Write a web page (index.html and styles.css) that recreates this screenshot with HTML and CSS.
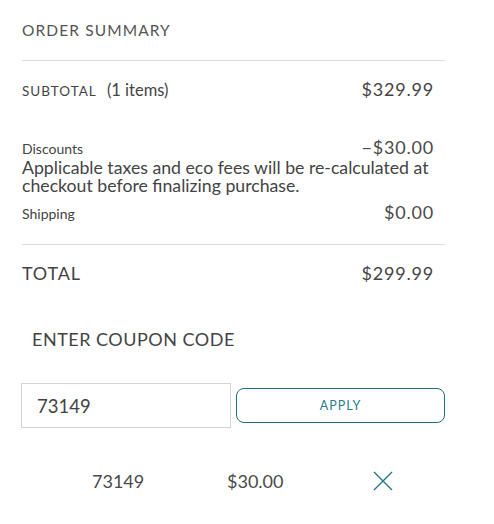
FILE: index.html
```html
<!DOCTYPE html>
<html lang="en">
<head>
    <meta charset="UTF-8">
    <meta name="viewport" content="width=device-width, initial-scale=1.0">
    <title>Order Summary</title>
<link rel="stylesheet" href="styles.css">
</head>
<body>
    <div class="summary">
        <h2 class="summary-title">ORDER SUMMARY</h2>

        <div class="row subtotal">
            <span><span class="label-caps">SUBTOTAL</span> <span class="items">(1 items)</span></span>
            <span class="amount">$329.99</span>
        </div>

        <div class="details">
            <div class="row small-row">
                <span class="small-label">Discounts</span>
                <span class="amount light">&minus;$30.00</span>
            </div>
            <p class="note">Applicable taxes and eco fees will be re-calculated at checkout before finalizing purchase.</p>
            <div class="row small-row">
                <span class="small-label">Shipping</span>
                <span class="amount light">$0.00</span>
            </div>
        </div>

        <div class="row total">
            <span>TOTAL</span>
            <span class="amount">$299.99</span>
        </div>

        <h3 class="coupon-title">ENTER COUPON CODE</h3>

        <div class="coupon-form">
            <input class="coupon-input" type="text" value="73149">
            <button class="apply-btn">APPLY</button>
        </div>

        <div class="applied">
            <span class="applied-code">73149</span>
            <span class="applied-amount">$30.00</span>
            <button class="remove-btn" title="Remove">
                <svg width="20" height="20" viewBox="0 0 20 20">
                    <path d="M1 1 L19 19 M19 1 L1 19" stroke="#1f7c85" stroke-width="1.4" fill="none"/>
                </svg>
            </button>
        </div>
    </div>
</body>
</html>
```

FILE: styles.css
```css
body {
  margin: 0;
  padding: 0;
  background: #fff;
  font-family: "Lato", "Open Sans", sans-serif;
  color: #444;
}

.summary {
  width: 423px;
  margin-left: 22px;
  padding-top: 20px;
}

.summary-title {
  margin: 0;
  font-size: 15.5px;
  line-height: 20px;
  font-weight: 400;
  letter-spacing: 1.1px;
  color: #555;
  padding-bottom: 20px;
  border-bottom: 1px solid #dcdcdc;
}

.row {
  display: flex;
  justify-content: space-between;
  align-items: baseline;
  padding-right: 11px;
}

.subtotal {
  padding-top: 18px;
  line-height: 20px;
}

.label-caps {
  font-size: 13.5px;
  letter-spacing: 1px;
  margin-right: 6px;
}

.items {
  font-size: 16.5px;
}

.amount {
  font-size: 18px;
  letter-spacing: 0.8px;
}

.amount.light {
  color: #4a4a4a;
}

.details {
  margin-top: 37px;
  padding-bottom: 21px;
  border-bottom: 1px solid #dcdcdc;
}

.small-row {
  line-height: 18px;
}

.small-label {
  font-size: 14px;
}

.note {
  margin: 1px 0 8px;
  font-size: 17.7px;
  line-height: 18px;
}

.total {
  padding-top: 18px;
  font-size: 18px;
  line-height: 20px;
  letter-spacing: 0.8px;
}

.coupon-title {
  margin: 46px 0 0 10px;
  font-size: 18px;
  line-height: 20px;
  font-weight: 400;
  letter-spacing: 0.5px;
}

.coupon-form {
  display: flex;
  align-items: center;
  gap: 5px;
  margin-top: 34px;
}

.coupon-input {
  box-sizing: border-box;
  width: 210px;
  height: 45px;
  margin-left: -1px;
  padding: 0 15px;
  border: 1px solid #d4d4d4;
  font-family: inherit;
  font-size: 18.5px;
  color: #444;
  outline: none;
}

.apply-btn {
  box-sizing: border-box;
  width: 209px;
  height: 35px;
  border: 1px solid #1f6f78;
  border-radius: 8px;
  background: #fff;
  color: #2a7f88;
  font-family: inherit;
  font-size: 12.5px;
  letter-spacing: 1px;
  cursor: pointer;
}

.applied {
  display: flex;
  align-items: center;
  margin-top: 42px;
  font-size: 18px;
  color: #4a4a4a;
}

.applied-code {
  margin-left: 70px;
  width: 135px;
}

.applied-amount {
  width: 146px;
}

.remove-btn {
  border: none;
  background: none;
  padding: 0;
  width: 20px;
  height: 20px;
  cursor: pointer;
}
```
